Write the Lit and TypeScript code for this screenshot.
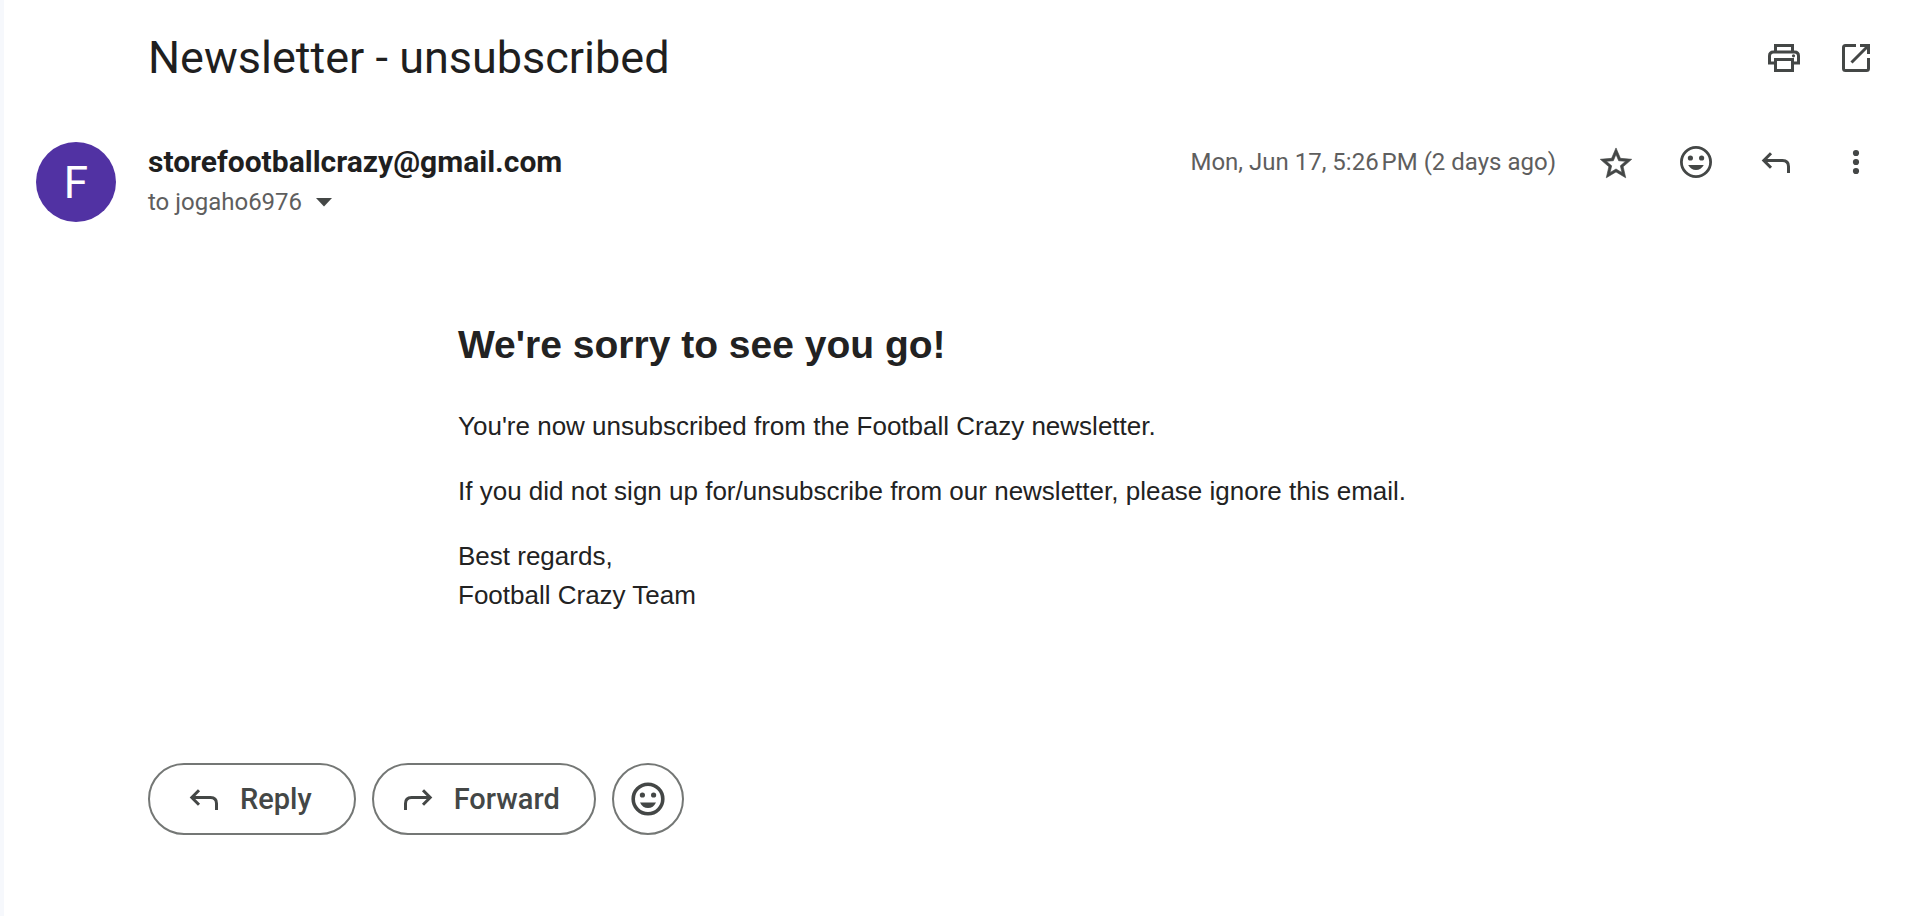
import { LitElement, html, css, svg } from "lit";
import { customElement } from "lit/decorators.js";

const replyArrow = svg`<path d="M15 11.200L7.800 18.500L15 25.800M7.800 18.500H26.500Q32.500 18.500 32.500 24.500V31" />`;

const icons = {
  print: svg`<g fill="none" stroke="currentColor" stroke-width="3">
      <path d="M11.500 13V7.500H28.500V13" />
      <path d="M11.500 25H5.500V18Q5.500 14 9.500 14H30.500Q34.500 14 34.500 18V25H28.500" />
      <path d="M11.500 21.500H28.500V32.500H11.500Z" />
    </g><circle cx="29.500" cy="17.800" r="1.600" fill="currentColor" />`,
  open: svg`<g fill="none" stroke="currentColor" stroke-width="3">
      <path d="M20 7.500H9.500Q7.500 7.500 7.500 9.500V30.500Q7.500 32.500 9.500 32.500H30.500Q32.500 32.500 32.500 30.500V20" />
      <path d="M24 7.500H32.500V16M32 8L15.500 24.500" />
    </g>`,
  star: svg`<path fill="currentColor" stroke="currentColor" stroke-width="0.400" transform="translate(1.160 2.800) scale(1.570)"
      d="M22 9.240l-7.190-.620L12 2 9.190 8.630 2 9.240l5.460 4.730L5.820 21 12 17.270 18.180 21l-1.630-7.030L22 9.240zM12 15.400l-3.760 2.270 1-4.280-3.320-2.880 4.380-.380L12 6.100l1.710 4.040 4.380.380-3.320 2.880 1 4.280L12 15.400z" />`,
  smile: svg`<circle cx="20" cy="20" r="14.600" fill="none" stroke="currentColor" stroke-width="2.800" />
    <g fill="currentColor"><circle cx="14.400" cy="16" r="2.600" /><circle cx="25.600" cy="16" r="2.600" />
    <path d="M12.200 23H27.800Q25 28 20 28Q15 28 12.200 23Z" /></g>`,
  smileBold: svg`<circle cx="20" cy="20" r="14.800" fill="none" stroke="currentColor" stroke-width="3.600" />
    <g fill="currentColor"><circle cx="14.400" cy="16" r="2.600" /><circle cx="25.600" cy="16" r="2.600" />
    <path d="M12 23.500H28Q25.400 29 20 29Q14.600 29 12 23.500Z" /></g>`,
  reply: svg`<g fill="none" stroke="currentColor" stroke-width="3">${replyArrow}</g>`,
  forward: svg`<g fill="none" stroke="currentColor" stroke-width="3" transform="matrix(-1 0 0 1 40 0)">${replyArrow}</g>`,
  more: svg`<g fill="currentColor"><circle cx="20" cy="11" r="3.100" /><circle cx="20" cy="20" r="3.100" /><circle cx="20" cy="29" r="3.100" /></g>`,
};

const icon = (name: keyof typeof icons) =>
  html`<svg class="icon" viewBox="0 0 40 40" aria-hidden="true">${icons[name]}</svg>`;

@customElement("app-root")
export class AppRoot extends LitElement {
  static styles = css`
    :host {
      display: block;
      box-sizing: border-box;
      min-height: 100vh;
      border-left: 4px solid #f6f8fc;
      background: #fff;
      color: #1f1f1f;
      font-family: Roboto, "Open Sans", sans-serif;
    }
    h1, h2, p { margin: 0; }
    button {
      font: inherit;
      color: #444746;
      background: none;
      border: 0;
      padding: 0;
      cursor: pointer;
    }
    .icon { display: block; width: 40px; height: 40px; flex: none; }
    .subject {
      display: flex;
      align-items: center;
      justify-content: space-between;
      padding: 30px 30px 0 144px;
    }
    .subject h1 { font-size: 45px; line-height: 56px; font-weight: 400; }
    .tools { display: flex; gap: 32px; }
    .header {
      display: flex;
      align-items: flex-start;
      padding: 56px 30px 0 32px;
    }
    .avatar {
      width: 80px;
      height: 80px;
      flex: none;
      margin-right: 32px;
      border-radius: 50%;
      background: #5132a3;
      color: #fff;
      font-size: 44px;
      line-height: 82px;
      text-align: center;
    }
    .sender { flex: 1; }
    .address { font-size: 30px; line-height: 40px; font-weight: 700; }
    .recipient {
      display: flex;
      align-items: center;
      gap: 14px;
      color: #5e5e5e;
      font-size: 24px;
      line-height: 40px;
    }
    .caret { display: block; width: 16px; height: 10px; color: #444746; }
    .meta { display: flex; align-items: center; gap: 40px; }
    .date { color: #5e5e5e; font-size: 24px; line-height: 40px; }
    .body {
      max-width: 1122px;
      margin: 93px auto 0;
      padding: 0 16px 0 144px;
      font: 26px/39px "Liberation Sans", Arial, sans-serif;
      color: #222;
    }
    .body h2 { font-size: 39px; line-height: 60px; font-weight: 700; margin-bottom: 32px; }
    .body p + p { margin-top: 26px; }
    .actions { display: flex; gap: 16px; padding: 148px 30px 0 144px; }
    .pill {
      display: flex;
      align-items: center;
      gap: 16px;
      box-sizing: border-box;
      height: 72px;
      padding: 0 42px 0 34px;
      border: 2px solid #747775;
      border-radius: 36px;
      font-size: 29px;
      font-weight: 500;
    }
    .pill.forward { padding: 0 34px 0 24px; }
    .pill.round { width: 72px; padding: 0; justify-content: center; }
  `;

  render() {
    return html`
      <header class="subject">
        <h1>Newsletter - unsubscribed</h1>
        <div class="tools">
          <button aria-label="Print">${icon("print")}</button>
          <button aria-label="Open in new window">${icon("open")}</button>
        </div>
      </header>
      <section class="header">
        <div class="avatar">F</div>
        <div class="sender">
          <div class="address">storefootballcrazy@gmail.com</div>
          <div class="recipient">
            <span>to jogaho6976</span>
            <button aria-label="Show details">
              <svg class="caret" viewBox="0 0 16 10" aria-hidden="true"><path d="M0 1H16L8 9.500Z" fill="currentColor" /></svg>
            </button>
          </div>
        </div>
        <div class="meta">
          <span class="date">Mon, Jun 17, 5:26&#8239;PM (2 days ago)</span>
          <button aria-label="Star">${icon("star")}</button>
          <button aria-label="Add reaction">${icon("smile")}</button>
          <button aria-label="Reply">${icon("reply")}</button>
          <button aria-label="More">${icon("more")}</button>
        </div>
      </section>
      <article class="body">
        <h2>We're sorry to see you go!</h2>
        <p>You're now unsubscribed from the Football Crazy newsletter.</p>
        <p>If you did not sign up for/unsubscribe from our newsletter, please ignore this email.</p>
        <p>Best regards,<br />Football Crazy Team</p>
      </article>
      <footer class="actions">
        <button class="pill">${icon("reply")}<span>Reply</span></button>
        <button class="pill forward">${icon("forward")}<span>Forward</span></button>
        <button class="pill round" aria-label="Add reaction">${icon("smileBold")}</button>
      </footer>
    `;
  }
}
